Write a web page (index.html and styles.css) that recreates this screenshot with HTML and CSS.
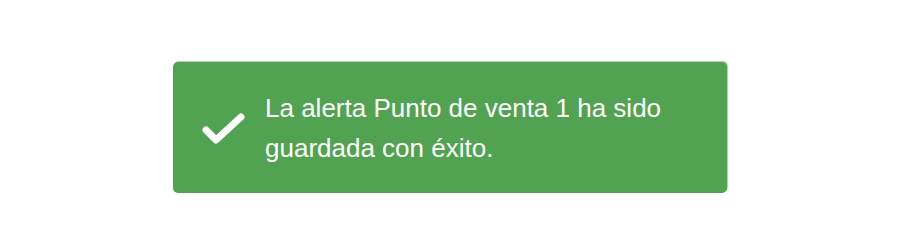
FILE: index.html
```html
<!DOCTYPE html>
<html lang="es">
<head>
    <meta charset="UTF-8">
    <title>Alerta guardada</title>
    <link rel="stylesheet" href="styles.css">
</head>
<body>

    <div class="toast toast-success">
        <svg class="toast-icon" width="46" height="36" viewBox="0 0 46 36">
            <path d="M6 19 L16 29 L41 6" fill="none" stroke="#fff" stroke-width="7" stroke-linecap="round" stroke-linejoin="round"/>
        </svg>
        <div class="toast-message">La alerta Punto de venta 1 ha sido guardada con éxito.</div>
    </div>

</body>
</html>
```

FILE: styles.css
```css
body {
    font-family: "Liberation Sans", Arial, sans-serif;
    background-color: white;
    margin: 0;
    padding: 0;
}
.toast {
    display: flex;
    align-items: center;
    width: 554px;
    box-sizing: border-box;
    margin: 62px auto 0;
    padding: 26px 40px 25px 27px;
    border-radius: 5px;
    color: white;
    box-shadow: 1px -1px 1px rgba(0, 0, 0, 0.25);
}
.toast-success {
    background-color: #51a351; /* verde */
}
.toast-icon {
    flex: none;
    margin-right: 19px;
    margin-top: 2px;
}
.toast-message {
    font-size: 26px;
    line-height: 40px;
}
```
